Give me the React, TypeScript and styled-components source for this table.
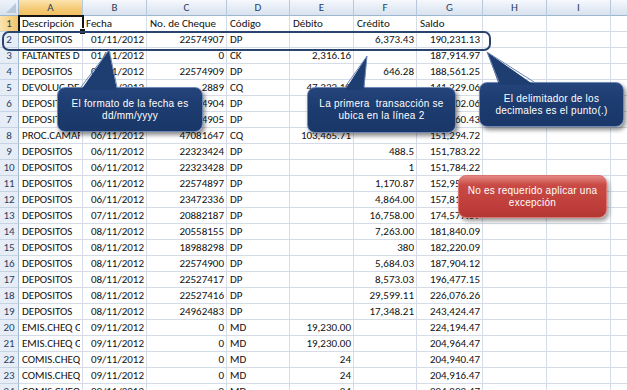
import React from "react";
import styled, { createGlobalStyle, css } from "styled-components";

const GlobalStyle = createGlobalStyle`
  html, body {
    margin: 0;
    padding: 0;
    background: #fff;
    overflow: hidden;
  }
`;

const Sheet = styled.div`
  position: relative;
  width: 627px;
  height: 390px;
  overflow: hidden;
  font-family: Calibri, Carlito, "Liberation Sans", Arial, sans-serif;
  font-size: 11px;
  color: #111;
`;

const Grid = styled.div`
  display: grid;
  grid-template-columns: 19px 64px 64px 80px 63px 64px 63px 66px 64px 64px 64px;
  grid-auto-rows: 16px;
`;

const Corner = styled.div`
  position: relative;
  box-sizing: border-box;
  background: linear-gradient(#eef3fa, #d7e1ef);
  border-right: 1px solid #9eb6ce;
  border-bottom: 1px solid #9eb6ce;

  &::after {
    content: "";
    position: absolute;
    right: 2px;
    bottom: 2px;
    border-left: 10px solid transparent;
    border-bottom: 10px solid #b9c8db;
  }
`;

const ColHead = styled.div<{ $active?: boolean }>`
  box-sizing: border-box;
  text-align: center;
  line-height: 15px;
  color: #2b3f5e;
  border-right: 1px solid #b7c8dc;
  border-bottom: 1px solid #9eb6ce;
  background: ${(p) =>
    p.$active
      ? "linear-gradient(#fbe4ae, #f5c976 60%, #f1c060)"
      : "linear-gradient(#f6f9fd, #e3eaf4 60%, #d9e2ef)"};
`;

const RowHead = styled.div<{ $active?: boolean }>`
  box-sizing: border-box;
  text-align: center;
  line-height: 15px;
  color: #2b3f5e;
  border-right: 1px solid #9eb6ce;
  border-bottom: 1px solid #c5d3e3;
  background: ${(p) =>
    p.$active ? "linear-gradient(90deg, #fbe4ae, #f3c46a)" : "#e6edf7"};
`;

const Cell = styled.div<{ $align?: "left" | "right"; $selected?: boolean }>`
  position: relative;
  box-sizing: border-box;
  padding: 0 2px 0 3px;
  line-height: 15px;
  white-space: nowrap;
  overflow: hidden;
  text-align: ${(p) => p.$align ?? "left"};
  border-right: 1px solid #d5dce8;
  border-bottom: 1px solid #d5dce8;
  ${(p) =>
    p.$selected &&
    css`
      overflow: visible;
      outline: 2px solid #151515;
      outline-offset: -1px;
      z-index: 1;
      &::after {
        content: "";
        position: absolute;
        right: -4px;
        bottom: -4px;
        width: 5px;
        height: 5px;
        background: #151515;
        border: 1px solid #fff;
      }
    `}
`;

const Clip = styled.span`
  display: block;
  overflow: hidden;
`;

const RowOutline = styled.div`
  position: absolute;
  left: 2px;
  top: 31px;
  width: 489px;
  height: 20px;
  box-sizing: border-box;
  border: 2px solid #2a4470;
  border-radius: 7px;
  z-index: 2;
`;

const Callout = styled.div<{
  $x: number;
  $y: number;
  $w: number;
  $h: number;
  $tone: "blue" | "red";
}>`
  position: absolute;
  left: ${(p) => p.$x}px;
  top: ${(p) => p.$y}px;
  width: ${(p) => p.$w}px;
  height: ${(p) => p.$h}px;
  box-sizing: border-box;
  display: flex;
  align-items: center;
  justify-content: center;
  text-align: center;
  border-radius: 8px;
  color: #fff;
  font-family: "Liberation Sans", Arial, sans-serif;
  font-size: 10px;
  line-height: 12px;
  letter-spacing: 0.25px;
  z-index: 3;
  ${(p) =>
    p.$tone === "blue"
      ? css`
          background: linear-gradient(#24447c, #1d3c70 40%, #193768);
          border: 1px solid #6e87b4;
          box-shadow: 2px 3px 4px rgba(0, 0, 0, 0.45);
        `
      : css`
          background: linear-gradient(#e48783, #c94a45 22%, #bd3c39 80%, #b23733);
          border: 1px solid #d97471;
          box-shadow: 2px 3px 4px rgba(0, 0, 0, 0.4);
        `}
`;

const Tails = styled.svg`
  position: absolute;
  left: 0;
  top: 0;
  width: 627px;
  height: 390px;
  pointer-events: none;
  z-index: 4;
`;

type Row = [string, string, string, string, string, string, string];

const HEADERS: Row = [
  "Descripción",
  "Fecha",
  "No. de Cheque",
  "Código",
  "Débito",
  "Crédito",
  "Saldo",
];

const ROWS: Row[] = [
  ["DEPOSITOS", "01/11/2012", "22574907", "DP", "", "6,373.43", "190,231.13"],
  ["FALTANTES DE CAJA", "01/11/2012", "0", "CK", "2,316.16", "", "187,914.97"],
  ["DEPOSITOS", "01/11/2012", "22574909", "DP", "", "646.28", "188,561.25"],
  ["DEVOLUC DE CHEQUE", "05/11/2012", "2889", "CQ", "47,332.19", "", "141,229.06"],
  ["DEPOSITOS", "05/11/2012", "22574904", "DP", "", "50,873.00", "192,102.06"],
  ["DEPOSITOS", "05/11/2012", "22574905", "DP", "", "62,658.37", "254,760.43"],
  ["PROC.CAMARA", "06/11/2012", "47081647", "CQ", "103,465.71", "", "151,294.72"],
  ["DEPOSITOS", "06/11/2012", "22323424", "DP", "", "488.5", "151,783.22"],
  ["DEPOSITOS", "06/11/2012", "22323428", "DP", "", "1", "151,784.22"],
  ["DEPOSITOS", "06/11/2012", "22574897", "DP", "", "1,170.87", "152,955.09"],
  ["DEPOSITOS", "06/11/2012", "23472336", "DP", "", "4,864.00", "157,819.09"],
  ["DEPOSITOS", "07/11/2012", "20882187", "DP", "", "16,758.00", "174,577.09"],
  ["DEPOSITOS", "08/11/2012", "20558155", "DP", "", "7,263.00", "181,840.09"],
  ["DEPOSITOS", "08/11/2012", "18988298", "DP", "", "380", "182,220.09"],
  ["DEPOSITOS", "08/11/2012", "22574900", "DP", "", "5,684.03", "187,904.12"],
  ["DEPOSITOS", "08/11/2012", "22527417", "DP", "", "8,573.03", "196,477.15"],
  ["DEPOSITOS", "08/11/2012", "22527416", "DP", "", "29,599.11", "226,076.26"],
  ["DEPOSITOS", "08/11/2012", "24962483", "DP", "", "17,348.21", "243,424.47"],
  ["EMIS.CHEQ GERENCIA", "09/11/2012", "0", "MD", "19,230.00", "", "224,194.47"],
  ["EMIS.CHEQ GERENCIA", "09/11/2012", "0", "MD", "19,230.00", "", "204,964.47"],
  ["COMIS.CHEQUE GER", "09/11/2012", "0", "MD", "24", "", "204,940.47"],
  ["COMIS.CHEQUE GER", "09/11/2012", "0", "MD", "24", "", "204,916.47"],
  ["COMIS.CHEQUE GER", "09/11/2012", "0", "MD", "24", "", "204,892.47"],
];

const LETTERS = ["A", "B", "C", "D", "E", "F", "G", "H", "I", "J"];
const ALIGN: ("left" | "right")[] = ["left", "right", "right", "left", "right", "right", "right"];

const TAIL_FILL = "#1e3d71";
const TAIL_EDGE = "#6e87b4";

const tails = [
  { base: [81, 117, 90], tip: [109, 50] },
  { base: [345, 364, 90], tip: [367, 56] },
  { base: [499, 534, 85], tip: [487, 52] },
];

const App: React.FC = () => {
  return (
    <Sheet>
      <GlobalStyle />
      <Grid>
        <Corner />
        {LETTERS.map((l, i) => (
          <ColHead key={l} $active={i === 0}>
            {l}
          </ColHead>
        ))}

        <RowHead $active>1</RowHead>
        {HEADERS.map((h, i) => (
          <Cell key={h} $selected={i === 0}>
            {h}
          </Cell>
        ))}
        <Cell />
        <Cell />
        <Cell />

        {ROWS.map((row, r) => (
          <React.Fragment key={r}>
            <RowHead>{r + 2}</RowHead>
            {row.map((v, c) => (
              <Cell key={c} $align={ALIGN[c]}>
                {c === 0 ? <Clip>{v}</Clip> : v}
              </Cell>
            ))}
            <Cell />
            <Cell />
            <Cell />
          </React.Fragment>
        ))}
      </Grid>

      <RowOutline />

      <Callout $x={57} $y={87} $w={146} $h={45} $tone="blue">
        El formato de la fecha es
        <br />
        dd/mm/yyyy
      </Callout>
      <Callout $x={307} $y={87} $w={149} $h={46} $tone="blue">
        {"La primera\u00a0 transacción se"}
        <br />
        ubica en la línea 2
      </Callout>
      <Callout $x={479} $y={82} $w={145} $h={45} $tone="blue">
        El delimitador de los
        <br />
        decimales es el punto(.)
      </Callout>
      <Callout $x={458} $y={175} $w={149} $h={43} $tone="red">
        No es requerido aplicar una
        <br />
        excepción
      </Callout>

      <Tails viewBox="0 0 627 390">
        {tails.map(({ base: [x1, x2, y], tip: [tx, ty] }, i) => (
          <g key={i}>
            <polygon points={`${x1},${y} ${tx},${ty} ${x2},${y}`} fill={TAIL_FILL} />
            <polyline
              points={`${x1},${y - 3} ${tx},${ty} ${x2},${y - 3}`}
              fill="none"
              stroke={TAIL_EDGE}
              strokeWidth={1}
            />
          </g>
        ))}
      </Tails>
    </Sheet>
  );
};

export default App;
